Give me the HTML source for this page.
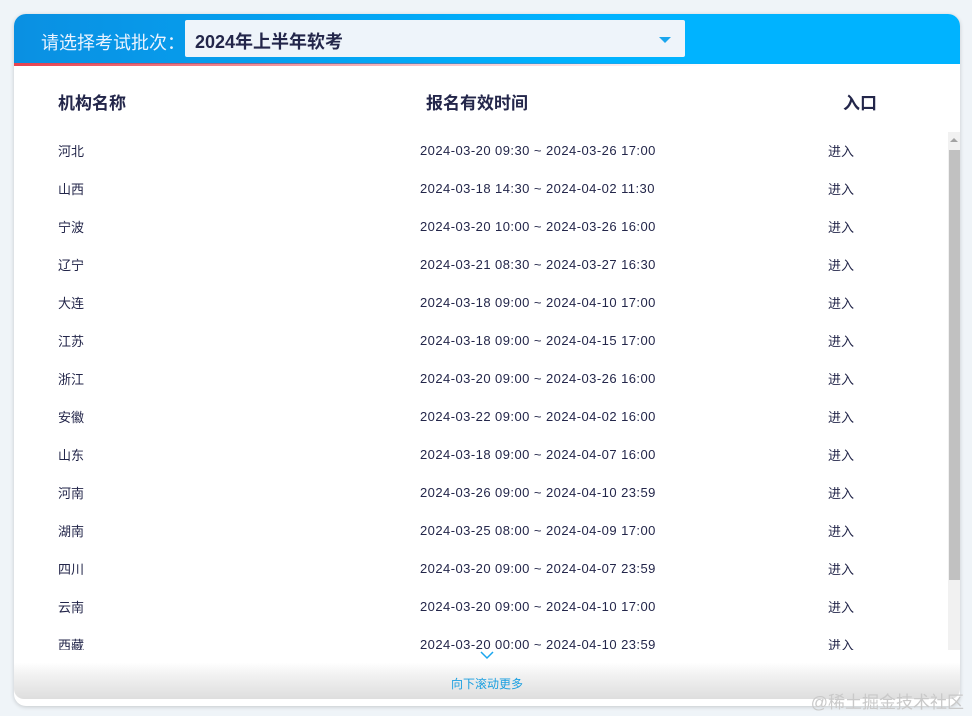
<!DOCTYPE html>
<html><head><meta charset="utf-8"><style>
*{margin:0;padding:0;box-sizing:border-box}
body{width:972px;height:716px;background:#eff4f8;font-family:"Liberation Sans","Noto Sans CJK SC",sans-serif;position:relative;overflow:hidden;color:#23264a}
.card{position:absolute;left:14px;top:14px;width:946px;height:692px;background:#fff;border-radius:12px;box-shadow:0 1px 4px rgba(0,0,0,.18);overflow:hidden}
.hd{position:absolute;left:0;top:0;width:946px;height:50px;background:linear-gradient(90deg,#0a90e2,#00b3ff 60%);}
.red{position:absolute;left:0;top:49px;width:946px;height:3px;background:linear-gradient(90deg,#e8434f,rgba(232,67,79,.3) 45%,rgba(255,255,255,0) 75%)}
.lbl{position:absolute;left:27px;top:15px;font-size:18px;color:#e9f3ff}
.sel{position:absolute;left:171px;top:6px;width:500px;height:37px;background:#eef4fa;border-radius:2px}
.sel span{position:absolute;left:10px;top:8px;font-size:18px;font-weight:bold;color:#23264a}
.sel i{position:absolute;right:14px;top:17px;border-left:6px solid transparent;border-right:6px solid transparent;border-top:6px solid #1aa6ee}
.th{position:absolute;top:75px;font-size:17px;font-weight:bold}
.list{position:absolute;left:0;top:118px;width:946px;height:518px;overflow:hidden}
.row{position:absolute;left:0;height:38px;width:930px;font-size:13px}
.row span{position:absolute;top:12px;line-height:16px}
.row span:nth-child(2){top:11px;letter-spacing:0.45px}
.sb{position:absolute;left:934px;top:118px;width:12px;height:518px;background:#f1f1f1}
.sb .t{position:absolute;left:1px;top:18px;width:11px;height:430px;background:#c1c1c1}
.sb .a{position:absolute;left:2px;top:6px;border-left:4px solid transparent;border-right:4px solid transparent;border-bottom:4px solid #a3a3a3}
.ft{position:absolute;left:0;top:636px;width:946px;height:49px;background:linear-gradient(#fff 0%,#fff 25%,#f0f0f0 55%,#dedede 100%);border-radius:0 0 10px 10px}
.ft .txt{position:absolute;top:25px;left:437px;font-size:12px;color:#1a9fe0}
.wm{position:absolute;right:8px;top:688px;font-size:17px;color:#c9c9c9}
</style></head><body>
<div class="card">
<div class="hd"></div><div class="red"></div>
<div class="lbl">请选择考试批次：</div>
<div class="sel"><span>2024年上半年软考</span><i></i></div>
<div class="th" style="left:44px">机构名称</div>
<div class="th" style="left:412px">报名有效时间</div>
<div class="th" style="left:829px">入口</div>
<div class="list">
<div class="row" style="top:0"><span style="left:44px">河北</span><span style="left:406px">2024-03-20 09:30 ~ 2024-03-26 17:00</span><span style="left:814px">进入</span></div>
<div class="row" style="top:38px"><span style="left:44px">山西</span><span style="left:406px">2024-03-18 14:30 ~ 2024-04-02 11:30</span><span style="left:814px">进入</span></div>
<div class="row" style="top:76px"><span style="left:44px">宁波</span><span style="left:406px">2024-03-20 10:00 ~ 2024-03-26 16:00</span><span style="left:814px">进入</span></div>
<div class="row" style="top:114px"><span style="left:44px">辽宁</span><span style="left:406px">2024-03-21 08:30 ~ 2024-03-27 16:30</span><span style="left:814px">进入</span></div>
<div class="row" style="top:152px"><span style="left:44px">大连</span><span style="left:406px">2024-03-18 09:00 ~ 2024-04-10 17:00</span><span style="left:814px">进入</span></div>
<div class="row" style="top:190px"><span style="left:44px">江苏</span><span style="left:406px">2024-03-18 09:00 ~ 2024-04-15 17:00</span><span style="left:814px">进入</span></div>
<div class="row" style="top:228px"><span style="left:44px">浙江</span><span style="left:406px">2024-03-20 09:00 ~ 2024-03-26 16:00</span><span style="left:814px">进入</span></div>
<div class="row" style="top:266px"><span style="left:44px">安徽</span><span style="left:406px">2024-03-22 09:00 ~ 2024-04-02 16:00</span><span style="left:814px">进入</span></div>
<div class="row" style="top:304px"><span style="left:44px">山东</span><span style="left:406px">2024-03-18 09:00 ~ 2024-04-07 16:00</span><span style="left:814px">进入</span></div>
<div class="row" style="top:342px"><span style="left:44px">河南</span><span style="left:406px">2024-03-26 09:00 ~ 2024-04-10 23:59</span><span style="left:814px">进入</span></div>
<div class="row" style="top:380px"><span style="left:44px">湖南</span><span style="left:406px">2024-03-25 08:00 ~ 2024-04-09 17:00</span><span style="left:814px">进入</span></div>
<div class="row" style="top:418px"><span style="left:44px">四川</span><span style="left:406px">2024-03-20 09:00 ~ 2024-04-07 23:59</span><span style="left:814px">进入</span></div>
<div class="row" style="top:456px"><span style="left:44px">云南</span><span style="left:406px">2024-03-20 09:00 ~ 2024-04-10 17:00</span><span style="left:814px">进入</span></div>
<div class="row" style="top:494px"><span style="left:44px">西藏</span><span style="left:406px">2024-03-20 00:00 ~ 2024-04-10 23:59</span><span style="left:814px">进入</span></div>
</div>
<div class="sb"><div class="a"></div><div class="t"></div></div>
<div class="ft"><div class="txt">向下滚动更多</div></div>
<svg style="position:absolute;left:466px;top:636px" width="14" height="10"><path d="M1 2 L7 8 L13 2" fill="none" stroke="#1aa6ee" stroke-width="1.5"/></svg>
</div>
<div class="wm">@稀土掘金技术社区</div>
</body></html>
